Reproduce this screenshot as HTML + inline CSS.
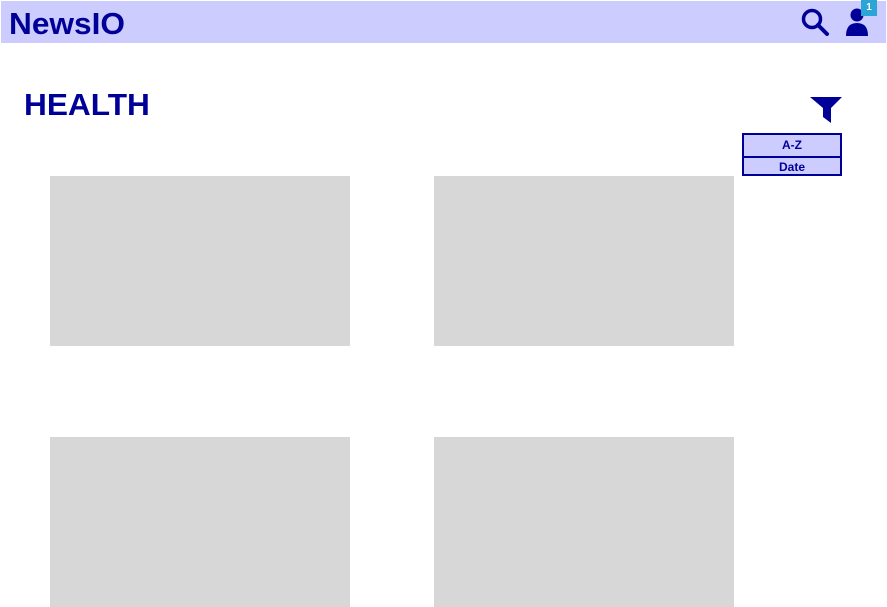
<!DOCTYPE html><html><head><style>
body{margin:0;width:887px;height:607px;background:#fff;position:relative;overflow:hidden;font-family:"Liberation Sans",sans-serif}
.hdr{position:absolute;left:1px;top:1px;width:885px;height:42px;background:#ccccff}
.logo{position:absolute;left:9px;top:6px;font-size:31px;font-weight:bold;color:#000099;transform:scaleX(1.02);transform-origin:left}
h1{position:absolute;left:24px;top:87px;margin:0;font-size:31px;font-weight:bold;color:#000099;transform:scaleX(1.02);transform-origin:left}
.card{position:absolute;width:300px;height:170px;background:#d7d7d7}
.sort{position:absolute;left:742px;top:133px;width:96px;height:39px;border:2px solid #000099;background:#ccccff}
.sort div{height:18px;line-height:18px;text-align:center;font-size:12px;font-weight:bold;color:#000099}
.badge{position:absolute;left:861px;top:0;width:16px;height:16px;background:#2aa5d6;color:#fff;font-size:10px;font-weight:bold;text-align:center;line-height:16px}
</style></head><body>
<div class="hdr"></div>
<div class="logo">NewsIO</div>
<svg style="position:absolute;left:800px;top:6px" width="32" height="32"><circle cx="12" cy="13" r="8.5" fill="none" stroke="#000099" stroke-width="3.5"/><line x1="18" y1="19" x2="27" y2="28" stroke="#000099" stroke-width="4" stroke-linecap="round"/></svg>
<svg style="position:absolute;left:844px;top:6px" width="28" height="32"><circle cx="13" cy="9" r="6.5" fill="#000099"/><path d="M2 30 Q2 17 13 17 Q24 17 24 30 Z" fill="#000099"/></svg>
<div class="badge">1</div>
<h1>HEALTH</h1>
<svg style="position:absolute;left:809px;top:96px" width="34" height="28"><path d="M1 1 H33 L22 12 V27 L14 21 V12 Z" fill="#000099"/></svg>
<div class="sort"><div style="border-bottom:2px solid #000099;height:21px;line-height:21px">A-Z</div><div>Date</div></div>
<div class="card" style="left:50px;top:176px"></div>
<div class="card" style="left:434px;top:176px"></div>
<div class="card" style="left:50px;top:437px"></div>
<div class="card" style="left:434px;top:437px"></div>
</body></html>
